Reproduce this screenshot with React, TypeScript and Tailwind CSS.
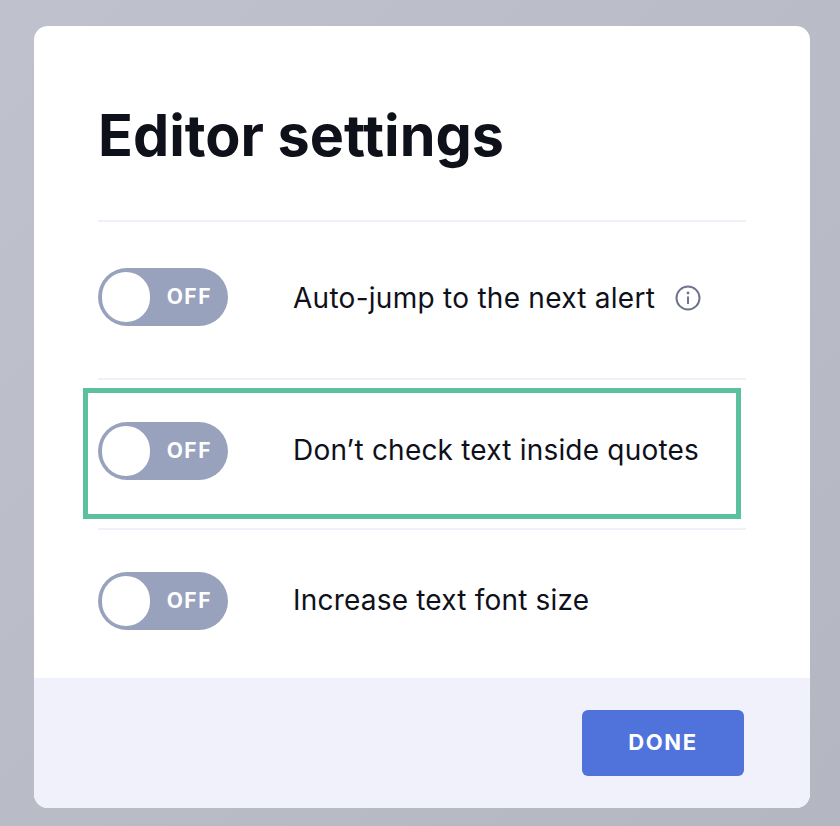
function Toggle() {
  return (
    <div className="flex h-[58px] w-[130px] shrink-0 items-center justify-between rounded-[29px] bg-[#98a2bd] pl-1 pr-4">
      <div className="h-[50px] w-[48px] rounded-full bg-white" />
      <span className="text-[21px] font-bold tracking-[1.5px] text-white">OFF</span>
    </div>
  );
}

function Row({ label, cls, textCls, icon }: { label: string; cls: string; textCls: string; icon?: boolean }) {
  return (
    <div className={`flex items-center border-b-2 border-[#f0f1f8] pb-[6px] last:border-b-0 ${cls}`}>
      <Toggle />
      <span className={`ml-[65px] text-[28px] leading-[36px] text-[#0e101a] ${textCls}`}>{label}</span>
      {icon && (
        <svg className="ml-[20px] mt-[2px]" width="26" height="26" viewBox="0 0 26 26" fill="none">
          <circle cx="13" cy="13" r="11.5" stroke="#6d758d" strokeWidth="2" />
          <circle cx="13" cy="8" r="1.4" fill="#6d758d" />
          <path d="M13 11.5V19" stroke="#6d758d" strokeWidth="2" />
        </svg>
      )}
    </div>
  );
}

export default function App() {
  return (
    <div className="h-[826px] w-[840px] bg-gradient-to-br from-[#bfc1cc] to-[#b4b6c1] pl-[34px] pt-[26px] font-['Inter',sans-serif]">
      <div className="relative flex h-[782px] w-[776px] flex-col overflow-hidden rounded-[14px] bg-white">
        <div className="flex-1 px-16">
          <h1 className="h-[196px] border-b-2 border-[#f0f1f8] pt-[74px] text-[57.5px] font-bold leading-[70px] text-[#0e101a]">
            Editor settings
          </h1>
          <Row label="Auto-jump to the next alert" cls="h-[158px]" textCls="mt-[1px] tracking-[0.27px]" icon />
          <Row label="Don’t check text inside quotes" cls="h-[150px]" textCls="-mt-[2px] tracking-[0.2px]" />
          <Row label="Increase text font size" cls="h-[148px]" textCls="-mt-[3px] tracking-[0.2px]" />
        </div>
        <div className="flex h-[130px] items-center justify-end bg-[#f0f1fa] px-[66px]">
          <button className="flex h-[66px] w-[162px] items-center justify-center rounded-md bg-[#4f73db] pb-[2px] text-[22px] font-bold tracking-[1.6px] text-white">
            DONE
          </button>
        </div>
        <div className="pointer-events-none absolute left-[49px] top-[362px] h-[131px] w-[658px] border-[5px] border-[#5bc09c]" />
      </div>
    </div>
  );
}
